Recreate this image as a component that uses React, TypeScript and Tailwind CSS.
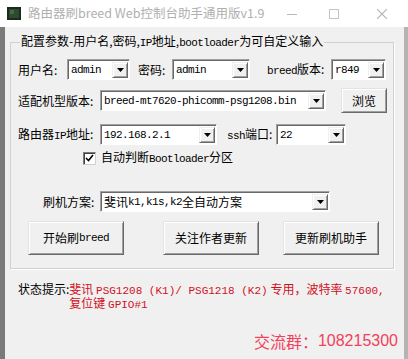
import React from 'react';

const cjk = "font-['Noto_Sans_CJK_SC',sans-serif]";
const mono = "font-['Liberation_Mono','Noto_Sans_CJK_SC',monospace] text-[11px] tracking-[-0.6px]";
const monoWide = "font-['Liberation_Mono','Noto_Sans_CJK_SC',monospace] text-[11px]";

const M: React.FC<{ children: React.ReactNode }> = ({ children }) => (
  <span className={mono}>{children}</span>
);

const Arrow = () => (
  <svg width="7" height="4" viewBox="0 0 7 4">
    <polygon points="0,0 7,0 3.5,4" fill="#000" />
  </svg>
);

const Combo: React.FC<{ w: string; children: React.ReactNode }> = ({ w, children }) => (
  <div
    className={`${w} h-[21px] flex bg-white border border-t-[#a0a0a0] border-l-[#a0a0a0] border-r-white border-b-white shadow-[inset_1px_1px_0_#696969] pt-[2px] pb-[1px] pr-[1px] pl-[2px]`}
  >
    <div className={`flex-1 pl-[1px] flex items-center overflow-hidden whitespace-nowrap ${mono} text-black`}>
      {children}
    </div>
    <div className="w-[16px] flex items-center justify-center bg-[#f0f0f0] border border-t-[#f0f0f0] border-l-[#f0f0f0] border-r-[#696969] border-b-[#696969] shadow-[inset_1px_1px_0_#fff,inset_-1px_-1px_0_#a0a0a0]">
      <Arrow />
    </div>
  </div>
);

const Btn: React.FC<{ w: string; h: string; children: React.ReactNode }> = ({ w, h, children }) => (
  <div
    className={`${w} ${h} flex items-center justify-center bg-[#f0f0f0] border border-t-[#e3e3e3] border-l-[#e3e3e3] border-r-[#696969] border-b-[#696969] shadow-[inset_1px_1px_0_#fff,inset_-1px_-1px_0_#a0a0a0] text-[12px] text-black ${cjk}`}
  >
    {children}
  </div>
);

export default function App() {
  return (
    <div className={`w-[408px] h-[359px] flex flex-col bg-[#f0f0f0] ${cjk} text-[12px] text-black overflow-hidden`}>
      {/* title bar */}
      <div className="h-[27px] bg-white flex items-center">
        <svg className="ml-[7px]" width="14" height="13" viewBox="0 0 14 13">
          <rect x="0" y="0" width="14" height="13" fill="#1e2a20" />
          <rect x="2" y="2" width="10" height="9" fill="#2c4a30" />
          <rect x="3" y="3" width="4" height="4" fill="#3f6a42" />
        </svg>
        <span className="ml-[7px] text-[12.5px] text-[#b0b0b0] whitespace-nowrap">
          路由器刷breed Web控制台助手通用版v1.9
        </span>
        <div className="ml-auto flex items-center">
          <svg className="mr-[32px]" width="10" height="10" viewBox="0 0 10 10">
            <line x1="0" y1="5.5" x2="10" y2="5.5" stroke="#b8b8b8" strokeWidth="1" />
          </svg>
          <svg className="mr-[38px]" width="10" height="10" viewBox="0 0 10 10">
            <rect x="0.5" y="0.5" width="9" height="9" fill="none" stroke="#c4c4c4" strokeWidth="1" />
          </svg>
          <svg className="mr-[21px]" width="10" height="10" viewBox="0 0 10 10">
            <path d="M0 0 L10 10 M10 0 L0 10" stroke="#b0b0b0" strokeWidth="1.1" />
          </svg>
        </div>
      </div>

      {/* body */}
      <div className="flex-1 flex flex-col border-l-[5px] border-l-[#7a7a7a] border-r-[4px] border-r-[#b4b4b4]">
        <fieldset className="mt-[6px] ml-[5px] w-[384px] border border-[#d0d0d0] pl-[7px] pb-[13px] shadow-[1px_1px_0_#fff]">
          <legend className="ml-[2px] px-[1px] leading-[16px] whitespace-nowrap">
            配置参数-用户名,密码,<M>IP</M>地址,<M>bootloader</M>为可自定义输入
          </legend>

          {/* row 1 */}
          <div className="mt-[8px] flex items-center h-[21px]">
            <span className="w-[49px]">用户名:</span>
            <Combo w="w-[63px]">admin</Combo>
            <span className="ml-[8px] w-[34px]">密码:</span>
            <Combo w="w-[78px]">admin</Combo>
            <span className="ml-[17px] w-[64px] whitespace-nowrap">
              <M>breed</M>版本:
            </span>
            <Combo w="w-[55px]">r849</Combo>
          </div>

          {/* row 2 */}
          <div className="mt-[8px] flex items-center h-[25px]">
            <span className="w-[82px] whitespace-nowrap">适配机型版本:</span>
            <Combo w="w-[226px]">breed-mt7620-phicomm-psg1208.bin</Combo>
            <div className="ml-[15px]">
              <Btn w="w-[46px]" h="h-[25px]">浏览</Btn>
            </div>
          </div>

          {/* row 3 */}
          <div className="mt-[11px] flex items-center h-[21px]">
            <span className="w-[82px] whitespace-nowrap">
              路由器<M>IP</M>地址:
            </span>
            <Combo w="w-[117px]">192.168.2.1</Combo>
            <span className="ml-[10px] w-[49px] whitespace-nowrap">
              <M>ssh</M>端口:
            </span>
            <Combo w="w-[70px]">22</Combo>
          </div>

          {/* checkbox */}
          <div className="mt-[6px] flex items-center h-[14px]">
            <div className="ml-[65px] w-[13px] h-[13px] bg-white border border-t-[#7a7a7a] border-l-[#7a7a7a] border-r-[#d0d0d0] border-b-[#d0d0d0] shadow-[inset_1px_1px_0_#404040] flex items-center justify-center">
              <svg width="9" height="8" viewBox="0 0 9 8">
                <path d="M1 4 L3.5 6.5 L8 1" fill="none" stroke="#000" strokeWidth="1.6" />
              </svg>
            </div>
            <span className="ml-[5px] whitespace-nowrap">
              自动判断<M>Bootloader</M>分区
            </span>
          </div>

          {/* row 4 */}
          <div className="mt-[26px] flex items-center h-[21px]">
            <span className="ml-[25px] w-[57px] whitespace-nowrap">刷机方案:</span>
            <Combo w="w-[230px]">
              <span className={`${cjk} text-[12px] tracking-normal`}>斐讯</span>k1,k1s,k2
              <span className={`${cjk} text-[12px] tracking-normal`}>全自动方案</span>
            </Combo>
          </div>

          {/* buttons */}
          <div className="mt-[9px] flex items-center">
            <div className="ml-[10px]">
              <Btn w="w-[96px]" h="h-[34px]">
                开始刷<M>breed</M>
              </Btn>
            </div>
            <div className="ml-[39px]">
              <Btn w="w-[96px]" h="h-[34px]">关注作者更新</Btn>
            </div>
            <div className="ml-[24px]">
              <Btn w="w-[96px]" h="h-[34px]">更新刷机助手</Btn>
            </div>
          </div>
        </fieldset>

        {/* status */}
        <div className="mt-[13px] ml-[13px] flex leading-[14px]">
          <div className="h-[14px] whitespace-nowrap">状态提示:</div>
          <div className="text-[#d0101e] whitespace-nowrap">
            <div className="h-[14px]">
              斐讯&nbsp;<span className={monoWide}>PSG1208 (K1)/ PSG1218 (K2)</span>&nbsp;专用，波特率&nbsp;
              <span className={monoWide}>57600,</span>
            </div>
            <div className="h-[14px]">
              复位键&nbsp;<span className={monoWide}>GPIO#1</span>
            </div>
          </div>
        </div>

        <div className="mt-auto mb-[6px] mr-[6px] flex justify-end items-center text-[#f0405a] text-[16px]">
          <span className={cjk}>交流群：</span>
          <span className="font-['Liberation_Sans',sans-serif]">108215300</span>
        </div>
      </div>
    </div>
  );
}
